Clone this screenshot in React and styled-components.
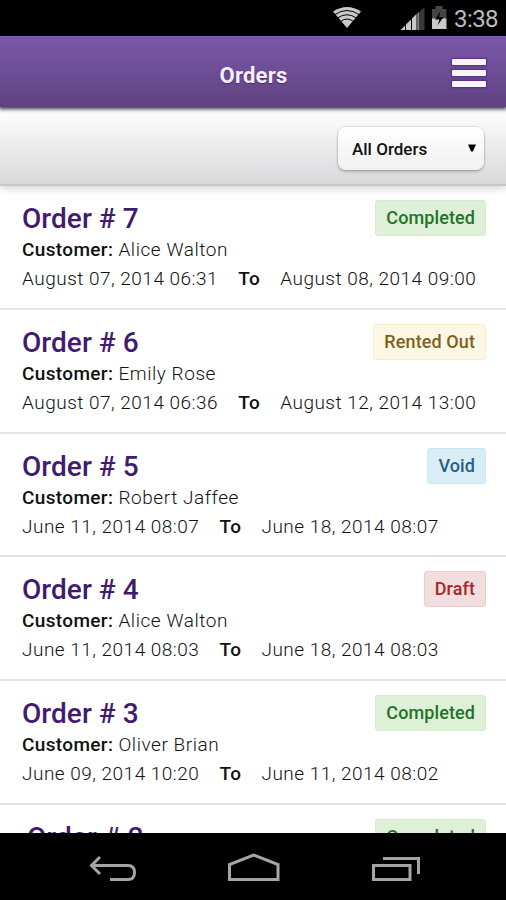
import React from 'react';
import styled, { createGlobalStyle } from 'styled-components';

const orders = [
    { id: 7, customer: 'Alice Walton', from: 'August 07, 2014 06:31', to: 'August 08, 2014 09:00', status: 'Completed' },
    { id: 6, customer: 'Emily Rose', from: 'August 07, 2014 06:36', to: 'August 12, 2014 13:00', status: 'Rented Out' },
    { id: 5, customer: 'Robert Jaffee', from: 'June 11, 2014 08:07', to: 'June 18, 2014 08:07', status: 'Void' },
    { id: 4, customer: 'Alice Walton', from: 'June 11, 2014 08:03', to: 'June 18, 2014 08:03', status: 'Draft' },
    { id: 3, customer: 'Oliver Brian', from: 'June 09, 2014 10:20', to: 'June 11, 2014 08:02', status: 'Completed' },
    { id: 2, status: 'Completed', indent: true },
];

const badgeColors = {
    'Completed': { text: '#1f7427', back: '#dff0d8', border: '#d6ebca' },
    'Rented Out': { text: '#806020', back: '#fcf8e3', border: '#faebcc' },
    'Void': { text: '#1f6286', back: '#d9edf7', border: '#cbe8f2' },
    'Draft': { text: '#ab2427', back: '#f2dede', border: '#ebccd1' },
};

const Order = ({ order }) => (
    <OrderRow>
        <OrderTop>
            <OrderTitle $indent={order.indent}>Order # {order.id}</OrderTitle>
            <Badge $colors={badgeColors[order.status]}>{order.status}</Badge>
        </OrderTop>
        {order.customer && (
            <>
                <Customer><strong>Customer:</strong> {order.customer}</Customer>
                <Dates>
                    <span>{order.from}</span>
                    <strong>To</strong>
                    <span>{order.to}</span>
                </Dates>
            </>
        )}
    </OrderRow>
);

const App = () => {
    return (
        <Phone>
            <GlobalStyle />
            <StatusBar>
                <svg width="174" height="35" viewBox="332 0 174 35">
                    <path d="M333 11.5Q347 2.500 361 11.500L347 28Z" fill="#c9c9c9" />
                    <g fill="none" stroke="#000" strokeWidth="1">
                        <path d="M335 14.500Q347 6.500 359 14.500" />
                        <path d="M337.500 18Q347 11.500 356.500 18" />
                        <path d="M340.500 21.500Q347 16.500 353.500 21.500" />
                    </g>
                    <path d="M424.500 7V30H418V13.500Z" fill="#383838" />
                    <path d="M400.500 30L418.500 12V30Z" fill="#c9c9c9" />
                    <path d="M405.500 24V30M411.500 18V30M417 12V30" stroke="#000" strokeWidth="1" />
                    <path d="M432 9H435.500V6H442.500V9H446.500V19H432Z" fill="#444" />
                    <path d="M432 18.500H446.500V29H432Z" fill="#c9c9c9" />
                    <path d="M440.500 11L435 19.500H439.500L437.500 25.500L443.500 17H439Z" fill="#000" />
                </svg>
                <Clock>3:38</Clock>
            </StatusBar>
            <Header>
                <h1>Orders</h1>
                <MenuButton aria-label="Menu">
                    <span />
                    <span />
                    <span />
                </MenuButton>
            </Header>
            <FilterBar>
                <Select>
                    All Orders
                    <svg width="8" height="8" viewBox="0 0 8 8"><path d="M0 0.500H8L4.800 7.500H3.200Z" fill="#000" /></svg>
                </Select>
            </FilterBar>
            <OrderList>
                {orders.map(order => <Order key={order.id} order={order} />)}
            </OrderList>
            <NavBar>
                <svg width="506" height="67" viewBox="0 833 506 67" fill="none" stroke="#a5a5a5" strokeWidth="3">
                    <path d="M100 857L91.500 865.500L100 874M92 865.500H128Q134.500 865.500 134.500 872.500T128 879.500H110" />
                    <path d="M229.500 879.500V864.500L253.500 855L278 864.500V879.500Z" />
                    <path d="M373.500 865.500H410V879.500H373.500ZM383 858.500H418.500V874" />
                </svg>
            </NavBar>
        </Phone>
    )
}

export default App;


const GlobalStyle = createGlobalStyle`
  * {
    box-sizing: border-box;
  }
  body {
    margin: 0;
    background: #fff;
    font-family: Roboto, "Liberation Sans", sans-serif;
  }
`;

const Phone = styled.div`
  width: 506px;
  height: 900px;
  display: flex;
  flex-direction: column;
  overflow: hidden;
`;

const StatusBar = styled.div`
  flex: none;
  height: 36px;
  display: grid;
  justify-content: end;
  background: #000;
  > * {
    grid-area: 1 / 1;
  }
`;

const Clock = styled.span`
  justify-self: end;
  padding-right: 8px;
  font-size: 24px;
  line-height: 38px;
  letter-spacing: -0.6px;
  color: #bdbdbd;
`;

const Header = styled.header`
  flex: none;
  height: 71px;
  display: grid;
  grid-template-columns: 1fr auto 1fr;
  align-items: center;
  padding: 0 20px;
  background: linear-gradient(#7c58aa, #5f4281);
  border-top: 1px solid #8560b2;
  box-shadow: 0 1px 4px 1px rgba(0, 0, 0, 0.8);
  z-index: 2;
  h1 {
    grid-column: 2;
    margin: 8px 0 0 1px;
    font-size: 22px;
    font-weight: 700;
    line-height: 26px;
    letter-spacing: 0.2px;
    color: #f6effc;
    text-shadow: 0 1px 1px rgba(50, 20, 80, 0.6);
  }
`;

const MenuButton = styled.button`
  justify-self: end;
  display: grid;
  gap: 5px;
  width: 34px;
  margin: 2px 0 0;
  padding: 0;
  border: 0;
  background: none;
  span {
    height: 6px;
    border-radius: 1px;
    background: #f8f4fc;
    box-shadow: 0 0 2px 1px rgba(75, 25, 120, 0.65);
  }
`;

const FilterBar = styled.div`
  flex: none;
  height: 79px;
  display: flex;
  justify-content: flex-end;
  padding: 20px 22px 0 0;
  background: linear-gradient(#fcfcfc 10%, #d8d8da);
  border-bottom: 2px solid #c7c7c8;
  box-shadow: 0 2px 8px rgba(0, 0, 0, 0.2);
  z-index: 1;
`;

const Select = styled.div`
  width: 146px;
  height: 43px;
  display: flex;
  align-items: center;
  justify-content: space-between;
  padding: 0 8px 0 14px;
  border-radius: 8px;
  background: linear-gradient(#fff, #f0f0f0);
  box-shadow: 0 0 1px 1px rgba(0, 0, 0, 0.1), 0 2px 3px rgba(0, 0, 0, 0.2);
  font-size: 17px;
  font-weight: 500;
  color: #111;
  svg {
    margin-bottom: 2px;
  }
`;

const OrderList = styled.main`
  flex: 1;
  min-height: 0;
  overflow: hidden;
  background: #fff;
`;

const OrderRow = styled.section`
  height: 123.8px;
  padding: 14px 20px 0 22px;
  border-bottom: 2px solid #e4e4e4;
`;

const OrderTop = styled.div`
  display: flex;
  justify-content: space-between;
  height: 35px;
`;

const OrderTitle = styled.h2`
  margin: 0;
  padding-left: ${props => props.$indent ? '5px' : '0'};
  font-size: 28px;
  font-weight: 500;
  line-height: 37px;
  letter-spacing: 0.05px;
  color: #421b70;
`;

const Badge = styled.span`
  height: 36px;
  padding: 0 10px;
  border: 1px solid ${props => props.$colors.border};
  border-radius: 3px;
  background: ${props => props.$colors.back};
  color: ${props => props.$colors.text};
  font-size: 18px;
  font-weight: 500;
  letter-spacing: 0.1px;
  line-height: 34px;
`;

const Customer = styled.div`
  font-size: 19px;
  font-weight: 300;
  line-height: 29px;
  letter-spacing: 0.55px;
  color: #111;
  strong {
    font-weight: 500;
    letter-spacing: 0.35px;
  }
`;

const Dates = styled.div`
  display: flex;
  gap: 20px;
  font-size: 19px;
  font-weight: 300;
  line-height: 30px;
  letter-spacing: 0.49px;
  white-space: nowrap;
  color: #111;
  strong {
    font-weight: 500;
  }
`;

const NavBar = styled.nav`
  flex: none;
  height: 67px;
  background: #000;
`;
